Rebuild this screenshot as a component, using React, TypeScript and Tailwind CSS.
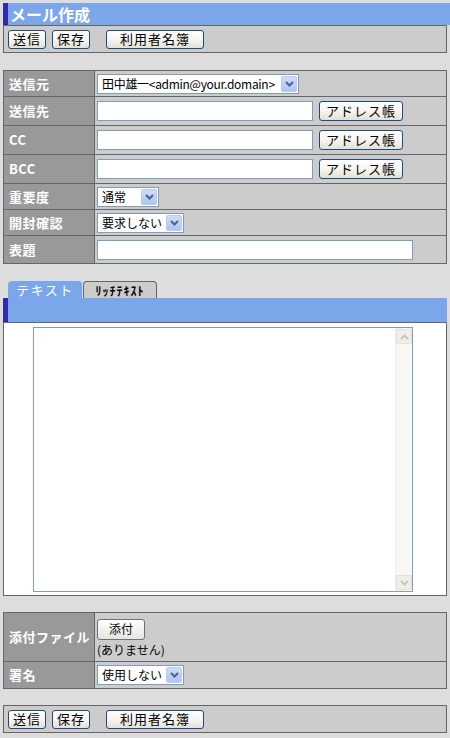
import React from "react";

const FONT = { fontFamily: '"Noto Sans CJK JP", "Noto Sans", sans-serif' };

function XPButton({ children, className = "" }: { children: React.ReactNode; className?: string }) {
  return (
    <div
      className={
        "h-[19px] border border-[#1f4c7c] rounded-[3px] bg-linear-to-b from-white via-[#f6f5f1] to-[#e3e0d4] text-[13px] leading-[16px] text-black flex items-center justify-center tracking-[1px] " +
        className
      }
    >
      {children}
    </div>
  );
}

function Chevron({ color = "#4d6185" }: { color?: string }) {
  return (
    <svg width="9" height="6" viewBox="0 0 9 6">
      <path d="M1 1 L4.5 4.5 L8 1" fill="none" stroke={color} strokeWidth="2" />
    </svg>
  );
}

function Select({ text, w, small = false }: { text: string; w: string; small?: boolean }) {
  return (
    <div className={"h-[20px] border border-[#7f9db9] bg-white flex items-center " + w}>
      <div
        className={
          "flex-1 min-w-0 pl-[4px] leading-[16px] text-black whitespace-nowrap text-[12px] " +
          (small ? "tracking-[-0.3px]" : "")
        }
      >
        {text}
      </div>
      <div className="w-[16px] h-[16px] mr-[1px] shrink-0 rounded-[2px] border border-[#b9cbf3] bg-linear-to-b from-[#cfdcfa] to-[#aec4f4] flex items-center justify-center">
        <Chevron />
      </div>
    </div>
  );
}

function Input({ w }: { w: string }) {
  return <div className={"h-[20px] border border-[#7f9db9] bg-white " + w} />;
}

function Row({ label, h, children, first = false }: { label: string; h: string; children?: React.ReactNode; first?: boolean }) {
  return (
    <div className={"flex " + h + (first ? "" : " border-t border-[#666666]")}>
      <div className="w-[91px] bg-[#999999] border-r border-[#666666] flex items-center pl-[5px] text-white font-bold text-[13px] tracking-[0.5px]">
        {label}
      </div>
      <div className="flex-1 bg-[#cccccc] flex items-center pl-[2px]">{children}</div>
    </div>
  );
}

function Toolbar() {
  return (
    <div className="w-[444px] h-[28px] border border-[#666666] bg-[#cccccc] flex items-center pl-[4px]">
      <XPButton className="w-[38px]">送信</XPButton>
      <XPButton className="w-[38px] ml-[6px]">保存</XPButton>
      <XPButton className="w-[98px] ml-[16px]">利用者名簿</XPButton>
    </div>
  );
}

export default function App() {
  return (
    <div className="w-[450px] h-[738px] bg-[#dddddd] pt-[3px] pl-[3px] overflow-hidden" style={FONT}>
      <div className="h-[22px] bg-[#7ba6e9] border-l-[5px] border-[#2b2bb5] flex items-center pl-[2px] text-white font-bold text-[16px] leading-[20px]">
        メール作成
      </div>
      <Toolbar />

      <div className="w-[444px] mt-[17px] border border-[#666666]">
        <Row label="送信元" h="h-[25px]" first>
          <Select text="田中雄一<admin@your.domain>" w="w-[202px]" small />
        </Row>
        <Row label="送信先" h="h-[29px]">
          <Input w="w-[216px]" />
          <XPButton className="w-[84px] h-[20px] ml-[6px] text-[12px]">アドレス帳</XPButton>
        </Row>
        <Row label="CC" h="h-[29px]">
          <Input w="w-[216px]" />
          <XPButton className="w-[84px] h-[20px] ml-[6px] text-[12px]">アドレス帳</XPButton>
        </Row>
        <Row label="BCC" h="h-[29px]">
          <Input w="w-[216px]" />
          <XPButton className="w-[84px] h-[20px] ml-[6px] text-[12px]">アドレス帳</XPButton>
        </Row>
        <Row label="重要度" h="h-[26px]">
          <Select text="通常" w="w-[62px]" />
        </Row>
        <Row label="開封確認" h="h-[26px]">
          <Select text="要求しない" w="w-[87px]" />
        </Row>
        <Row label="表題" h="h-[28px]">
          <Input w="w-[316px] h-[19px]" />
        </Row>
      </div>

      <div className="flex items-end mt-[16px] pl-[5px] h-[18px]">
        <div className="w-[74px] h-[17px] bg-[#7ba6e9] rounded-t-[4px] flex items-center justify-center text-white text-[13px] leading-[16px] tracking-[1.5px]">
          テキスト
        </div>
        <div className="w-[74px] h-[17px] ml-[1px] bg-[#cccccc] border border-b-0 border-[#666666] rounded-t-[4px] flex items-center justify-center text-black font-bold text-[12px] leading-[15px] tracking-[1px]">
          ﾘｯﾁﾃｷｽﾄ
        </div>
      </div>
      <div className="w-[444px] h-[24px] bg-[#7ba6e9] border-l-[5px] border-[#2b2bb5]" />
      <div className="w-[444px] h-[274px] bg-white border border-[#666666] pl-[29px] pt-[4px]">
        <div className="w-[380px] h-[265px] border border-[#7f9db9] bg-white flex justify-end">
          <div className="w-[17px] h-full border-l border-[#ececec] bg-[#f7f7f5] flex flex-col justify-between py-[1px]">
            <div className="w-[16px] h-[15px] bg-[#efefe9] border border-[#e2e2d6] rounded-[2px] flex items-center justify-center">
              <svg width="9" height="6" viewBox="0 0 9 6">
                <path d="M1 5 L4.5 1.5 L8 5" fill="none" stroke="#c6c6bc" strokeWidth="2" />
              </svg>
            </div>
            <div className="w-[16px] h-[15px] bg-[#efefe9] border border-[#e2e2d6] rounded-[2px] flex items-center justify-center">
              <Chevron color="#c6c6bc" />
            </div>
          </div>
        </div>
      </div>

      <div className="w-[444px] mt-[16px] border border-[#666666]">
        <Row label="添付ファイル" h="h-[48px]" first>
          <div className="flex flex-col items-start pt-[1px]">
            <div className="w-[48px] h-[21px] border border-[#707070] rounded-[3px] bg-linear-to-b from-white to-[#e4e4e0] flex items-center justify-center text-[12px] leading-[16px] text-black">
              添付
            </div>
            <div className="text-[12px] leading-[14px] text-black mt-[3px]">(ありません)</div>
          </div>
        </Row>
        <Row label="署名" h="h-[27px]">
          <Select text="使用しない" w="w-[87px]" />
        </Row>
      </div>

      <div className="mt-[16px]">
        <Toolbar />
      </div>
    </div>
  );
}
